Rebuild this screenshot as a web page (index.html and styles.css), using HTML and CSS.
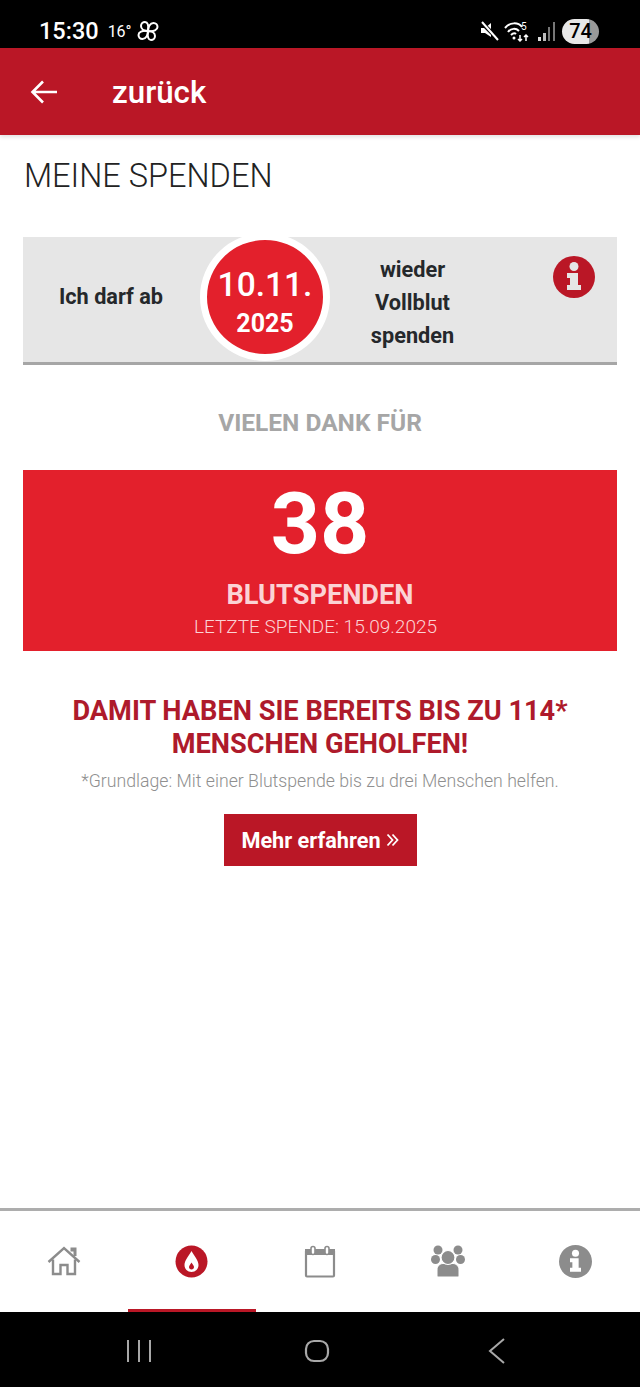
FILE: index.html
```html
<!DOCTYPE html>
<html lang="de">
<head>
    <meta charset="UTF-8">
    <meta name="viewport" content="width=device-width, initial-scale=1.0">
    <title>Meine Spenden</title>
    <link rel="stylesheet" href="styles.css">
</head>
<body>
    <div class="status-bar">
        <div class="status-left">
            <span class="status-time">15:30</span>
            <span class="status-temp">16°</span>
            <svg class="status-fan" width="24" height="24" viewBox="0 0 24 24" fill="none" stroke="#fff" stroke-width="2">
                <path d="M12 12C8 12 5 10 5 7C5 4.500 7 3 9 3C11.500 3 13 6 12 12Z"/>
                <path d="M12 12C12 8 14 4 17.500 4C20 4 21.500 6 21.500 8C21.500 10.500 18 13 12 12Z"/>
                <path d="M12 12C16 12 19 14 19 17C19 19.500 17 21 15 21C12.500 21 11 18 12 12Z"/>
                <path d="M12 12C12 16 10 20 6.500 20C4 20 2.500 18 2.500 16C2.500 13.500 6 11 12 12Z"/>
            </svg>
        </div>
        <div class="status-right">
            <svg width="22" height="22" viewBox="0 0 22 22">
                <path d="M2 8H6L12 3V17L6 13H2Z" fill="#fff"/>
                <path d="M3 3L20 20" stroke="#000" stroke-width="4"/>
                <path d="M3 2L19 20" stroke="#fff" stroke-width="2"/>
            </svg>
            <svg width="30" height="24" viewBox="0 0 30 24" fill="none" stroke="#fff" stroke-width="2">
                <path d="M1 9C6 3 14 3 18 8"/>
                <path d="M4 13C7 9 12 9 15 12"/>
                <path d="M7 16C9 14 11 14 12 15"/>
                <circle cx="10" cy="19" r="1.500" fill="#fff" stroke="none"/>
                <path d="M16 16V22M14 20L16 22L18 20M22 22V16M20 18L22 16L24 18" stroke-width="1.500"/>
                <text x="17" y="11" class="wifi-five">5</text>
            </svg>
            <svg width="20" height="24" viewBox="0 0 20 24">
                <rect x="1" y="18" width="3" height="4" fill="#ddd"/>
                <rect x="6" y="14" width="3" height="8" fill="#bbb"/>
                <rect x="11" y="8" width="2" height="14" fill="#777"/>
                <rect x="16" y="3" width="2" height="19" fill="#777"/>
            </svg>
            <span class="battery">74</span>
        </div>
    </div>

    <header class="app-bar">
        <svg width="28" height="28" viewBox="0 0 28 28" fill="none" stroke="#fff" stroke-width="2.600">
            <path d="M27 14H3M13 3.500L2.500 14L13 24.500"/>
        </svg>
        <span class="app-bar-title">zurück</span>
    </header>

    <main class="content">
        <h1 class="page-title">MEINE SPENDEN</h1>

        <section class="next-date">
            <div class="next-date-left">Ich darf ab</div>
            <div class="date-circle">
                <span class="date-day">10.11.</span>
                <span class="date-year">2025</span>
            </div>
            <div class="next-date-right">wieder<br>Vollblut<br>spenden</div>
            <svg class="next-date-info" width="42" height="42" viewBox="0 0 42 42">
                <circle cx="21" cy="21" r="21" fill="#ba1726"/>
                <circle cx="21" cy="10.500" r="4.500" fill="#e6e6e6"/>
                <path d="M14 17H25V29H28V34H14V29H17V22H14Z" fill="#e6e6e6"/>
            </svg>
        </section>

        <h2 class="thanks">VIELEN DANK FÜR</h2>

        <section class="count-box">
            <div class="count-number">38</div>
            <div class="count-label">BLUTSPENDEN</div>
            <div class="count-last">LETZTE SPENDE: 15.09.2025</div>
        </section>

        <h2 class="helped">DAMIT HABEN SIE BEREITS BIS ZU 114*<br>MENSCHEN GEHOLFEN!</h2>
        <p class="footnote">*Grundlage: Mit einer Blutspende bis zu drei Menschen helfen.</p>
        <a class="more-btn" href="#">Mehr erfahren
            <svg width="13" height="14" viewBox="0 0 13 14" fill="none" stroke="#fff" stroke-width="1.800">
                <path d="M1.500 1.500L6.500 7L1.500 12.500M6.500 1.500L11.500 7L6.500 12.500"/>
            </svg>
        </a>
    </main>

    <nav class="tab-bar">
        <a class="tab" href="#">
            <svg width="34" height="30" viewBox="0 0 34 30" fill="none" stroke="#8c8c8c" stroke-width="2.400">
                <path d="M1.500 16L17 2L32.500 16"/>
                <path d="M25 5.500V3H28V10" stroke-width="3"/>
                <path d="M6 13.500V28H13.500V19H20.500V28H28V13.500"/>
            </svg>
        </a>
        <a class="tab tab-active" href="#">
            <svg width="33" height="33" viewBox="0 0 33 33">
                <circle cx="16.500" cy="16.500" r="16" fill="#ba1726"/>
                <path d="M16.500 6C19 11 23.500 15 23.500 20C23.500 24 20.500 27 16.500 27C12.500 27 9.500 24 9.500 20C9.500 15 14 11 16.500 6Z" fill="#fff"/>
                <path d="M16.500 17.500C17.500 19.500 19 20.500 19 22C19 23.500 18 24.500 16.500 24.500C15 24.500 14 23.500 14 22C14 20.500 15.500 19.500 16.500 17.500Z" fill="#ba1726"/>
            </svg>
        </a>
        <a class="tab" href="#">
            <svg width="32" height="33" viewBox="0 0 32 33" fill="none" stroke="#8c8c8c">
                <rect x="2" y="5" width="28" height="26.500" rx="1" stroke-width="2.200"/>
                <path d="M1 4H31V10H1Z" fill="#8c8c8c" stroke="none"/>
                <rect x="7" y="1.500" width="4" height="8" rx="2" fill="#fff" stroke-width="1.600"/>
                <rect x="21" y="1.500" width="4" height="8" rx="2" fill="#fff" stroke-width="1.600"/>
            </svg>
        </a>
        <a class="tab" href="#">
            <svg width="34" height="32" viewBox="0 0 34 32" fill="#8c8c8c">
                <circle cx="7" cy="5" r="4.500"/>
                <circle cx="27" cy="5" r="4.500"/>
                <circle cx="4.500" cy="14.500" r="4.500"/>
                <circle cx="29.500" cy="14.500" r="4.500"/>
                <path d="M6 31V25C6 21 9 18.500 12 18.500H22C25 18.500 28 21 28 25V31C28 31.500 27.500 32 27 32H7C6.500 32 6 31.500 6 31Z" stroke="#fff" stroke-width="1"/>
                <circle cx="17" cy="12.500" r="7" stroke="#fff" stroke-width="1.200"/>
            </svg>
        </a>
        <a class="tab" href="#">
            <svg width="33" height="33" viewBox="0 0 42 42">
                <circle cx="21" cy="21" r="21" fill="#8c8c8c"/>
                <circle cx="21" cy="10.500" r="4.500" fill="#fff"/>
                <path d="M14 17H25V29H28V34H14V29H17V22H14Z" fill="#fff"/>
            </svg>
        </a>
    </nav>

    <div class="system-nav">
        <svg width="26" height="24" viewBox="0 0 26 24" stroke="#a8a8a8" stroke-width="2">
            <path d="M2 1V23M13 1V23M24 1V23"/>
        </svg>
        <svg width="26" height="24" viewBox="0 0 26 24" fill="none" stroke="#a8a8a8" stroke-width="2.200">
            <rect x="2" y="2" width="22" height="20" rx="8"/>
        </svg>
        <svg class="system-back" width="18" height="26" viewBox="0 0 18 26" fill="none" stroke="#a8a8a8" stroke-width="2">
            <path d="M16 1L2 13L16 25"/>
        </svg>
    </div>
</body>
</html>
```

FILE: styles.css
```css
* {
    box-sizing: border-box;
}
body {
    font-family: Roboto, "Liberation Sans", sans-serif;
    margin: 0;
    width: 640px;
    height: 1387px;
    display: flex;
    flex-direction: column;
    background: #fff;
    overflow: hidden;
}
a {
    text-decoration: none;
}

/* status bar */
.status-bar {
    height: 48px;
    background: #000;
    color: #fff;
    display: flex;
    justify-content: space-between;
    align-items: center;
    padding: 14px 41px 0 39px;
    flex: none;
}
.status-left,
.status-right {
    display: flex;
    align-items: center;
}
.status-time {
    font-size: 23.500px;
    font-weight: 500;
}
.status-temp {
    font-size: 16px;
    margin-left: 9px;
}
.status-fan {
    margin-left: 4px;
}
.status-right {
    gap: 3px;
}
.wifi-five {
    font-size: 10px;
    fill: #fff;
    stroke: none;
}
.battery {
    width: 37px;
    height: 25px;
    border-radius: 13px;
    background: linear-gradient(to right, #e8e8e8 74%, #999 74%);
    color: #000;
    font-size: 20px;
    font-weight: 500;
    line-height: 25px;
    text-align: center;
    margin-left: 2px;
}

/* app bar */
.app-bar {
    height: 87px;
    background: #ba1726;
    color: #fff;
    display: flex;
    align-items: center;
    padding: 0 0 0 30px;
    gap: 54px;
    flex: none;
    box-shadow: 0 2px 4px rgba(0, 0, 0, 0.12);
}
.app-bar-title {
    font-size: 31.300px;
    font-weight: 500;
    margin-top: 2px;
}

/* main content */
.content {
    flex: 1;
    padding: 0 23px;
    display: flex;
    flex-direction: column;
    align-items: center;
}
.page-title {
    align-self: flex-start;
    font-size: 32.500px;
    font-weight: 300;
    color: #222;
    margin: 21px 0 0 1px;
    line-height: 40px;
}
.next-date {
    width: 594px;
    height: 128px;
    margin-top: 41px;
    background: #e6e6e6;
    border-bottom: 3px solid #a6a6a6;
    display: flex;
    align-items: center;
    position: relative;
    color: #25282b;
    font-size: 21.700px;
    font-weight: 700;
}
.next-date-left {
    width: 176px;
    text-align: center;
    padding-bottom: 6px;
}
.date-circle {
    width: 130px;
    height: 128px;
    border-radius: 50%;
    background: #e3202c;
    border: 7px solid #fff;
    color: #fff;
    display: flex;
    flex-direction: column;
    align-items: center;
    justify-content: center;
    margin: 0 0 5px 1px;
    padding-top: 12px;
    flex: none;
}
.date-day {
    font-size: 33.500px;
    font-weight: 500;
    line-height: 40px;
}
.date-year {
    font-size: 25px;
    font-weight: 700;
    line-height: 37px;
}
.next-date-right {
    width: 165px;
    text-align: center;
    line-height: 33px;
    padding-top: 6px;
}
.next-date-info {
    position: absolute;
    right: 22px;
    top: 19px;
}
.thanks {
    font-size: 24.500px;
    font-weight: 700;
    color: #a6a6a6;
    margin: 40px 0 0;
    line-height: 36px;
}
.count-box {
    width: 594px;
    height: 181px;
    margin-top: 29px;
    background: #e3202c;
    color: #fff;
    display: flex;
    flex-direction: column;
    align-items: center;
}
.count-number {
    font-size: 86px;
    font-weight: 700;
    line-height: 100px;
    margin-top: 4px;
}
.count-label {
    font-size: 27.200px;
    font-weight: 700;
    color: #fbd3d5;
    line-height: 32px;
    margin-top: 5px;
}
.count-last {
    font-size: 19px;
    font-weight: 300;
    color: #fbd3d5;
    line-height: 26px;
    margin-top: 3px;
    margin-left: -9px;
}
.helped {
    font-size: 27.200px;
    font-weight: 700;
    color: #ae1a2b;
    text-align: center;
    line-height: 33px;
    margin: 44px 0 0;
}
.footnote {
    font-size: 17.700px;
    font-weight: 300;
    color: #8f8f8f;
    margin: 6px 0 0;
    line-height: 28px;
}
.more-btn {
    width: 193px;
    height: 52px;
    margin: 19px 0 0;
    background: #ba1726;
    color: #fff;
    font-size: 21.700px;
    font-weight: 700;
    display: flex;
    align-items: center;
    justify-content: center;
    gap: 5px;
}

/* bottom tabs */
.tab-bar {
    height: 104px;
    border-top: 3px solid #adadad;
    display: flex;
    flex: none;
}
.tab {
    width: 128px;
    display: flex;
    align-items: center;
    justify-content: center;
    padding: 0 1px 1px 0;
}
.tab-active {
    border-bottom: 3px solid #ba1726;
    padding: 2px 1px 0 0;
}
.system-nav {
    height: 75px;
    background: #000;
    display: flex;
    align-items: center;
    flex: none;
    padding: 2px 0 0 126px;
    gap: 152px;
}
.system-back {
    margin-left: 6px;
}
```
